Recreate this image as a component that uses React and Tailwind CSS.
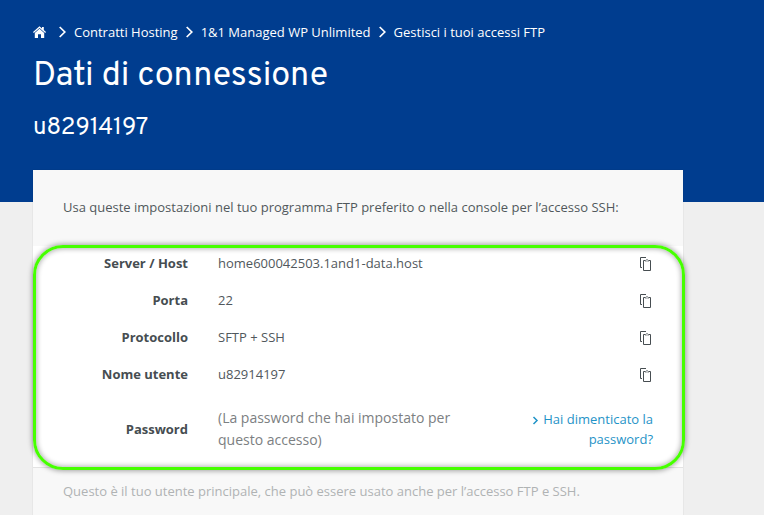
import React from "react";

const breadcrumbs = ["Contratti Hosting", "1&1 Managed WP Unlimited", "Gestisci i tuoi accessi FTP"];

const connectionData = [
    { label: "Server / Host", value: "home600042503.1and1-data.host" },
    { label: "Porta", value: "22" },
    { label: "Protocollo", value: "SFTP + SSH" },
    { label: "Nome utente", value: "u82914197" },
];

const HomeIcon = () => (
    <svg width="14" height="12" viewBox="0 0 14 12" fill="currentColor" aria-hidden="true">
        <path d="M6.500 0.300 9 2.500V1h1.800v3.100L13 6.100l-.8 1L6.500 2 .8 7.100 0 6.100Z" />
        <path d="M6.500 2.700 11.200 6.900V12H8V8.300H5V12H1.800V6.900Z" />
    </svg>
);

const ChevronIcon = () => (
    <svg width="7" height="12" viewBox="0 0 7 12" fill="none" stroke="currentColor" strokeWidth="1.700" aria-hidden="true">
        <path d="M.7 1 5.800 6 .7 11" />
    </svg>
);

const CopyIcon = () => (
    <svg width="11" height="15" viewBox="0 0 11 15" fill="none" stroke="currentColor" aria-hidden="true">
        <path d="M6 .5H.5V10.500H2" />
        <path d="M5 3.500H3.500V13.500H10.500V3.500H9" />
        <path d="M5 4 7 2.500 9 4" strokeOpacity=".8" />
        <path d="M5 4.500H9" strokeOpacity=".3" />
    </svg>
);

const Header = () => (
    <header className="h-[202px] bg-[#003d8f] px-[33px] pt-[22px] text-white">
        <nav aria-label="Breadcrumb">
            <ol className="flex h-5 items-center gap-2 text-[13px] leading-5 whitespace-nowrap">
                <li className="mr-1">
                    <a href="#home" aria-label="Home" className="block">
                        <HomeIcon />
                    </a>
                </li>
                {breadcrumbs.map((crumb) => (
                    <li key={crumb} className="flex items-center gap-2">
                        <ChevronIcon />
                        <a href="#crumb">{crumb}</a>
                    </li>
                ))}
            </ol>
        </nav>
        <h1 className="mt-[15px] font-[Overpass,Roboto,sans-serif] text-[34px] leading-10">Dati di connessione</h1>
        <h2 className="mt-[15px] font-[Overpass,Roboto,sans-serif] text-2xl leading-8">u82914197</h2>
    </header>
);

const ConnectionDetails = () => (
    <section className="relative border-b border-[#e3e3e3] bg-white text-[13px] leading-5">
        <dl>
            {connectionData.map((row) => (
                <div key={row.label} className="flex h-[37px] items-center pr-8">
                    <dt className="w-[155px] pb-1 text-right font-bold text-[#464d51]">{row.label}</dt>
                    <dd className="ml-[30px] flex flex-1 items-center justify-between text-[#51585c]">
                        <span className="pb-1">{row.value}</span>
                        <button type="button" aria-label={`Copia ${row.label}`} className="text-[#464d51]">
                            <CopyIcon />
                        </button>
                    </dd>
                </div>
            ))}
            <div className="flex h-[73px] items-center pr-[30px] pb-[3px]">
                <dt className="w-[155px] text-right font-bold text-[#464d51]">Password</dt>
                <dd className="ml-[30px] flex flex-1 items-center justify-between">
                    <span className="w-[260px] text-sm leading-[22px] text-[#7c8082]">(La password che hai impostato per questo accesso)</span>
                    <a href="#password" className="w-[130px] text-right text-[#1f93c7]">
                        <svg className="mr-1 inline-block" width="7" height="9" viewBox="0 0 7 9" fill="none" stroke="currentColor" strokeWidth="1.500" aria-hidden="true">
                            <path d="M1.500 1 5 4.500 1.500 8" />
                        </svg>
                        Hai dimenticato la password?
                    </a>
                </dd>
            </div>
        </dl>
        {/* Highlight around the connection data */}
        <div className="pointer-events-none absolute -top-px -right-0.5 -bottom-[3px] left-0 rounded-[30px] border-3 border-[#46ff00] shadow-[0_0_5px_1px_rgba(0,0,0,0.35),inset_0_0_5px_1px_rgba(0,0,0,0.3)]" />
    </section>
);

export default function App() {
    return (
        <div className="min-h-screen overflow-hidden bg-[#efefef] font-['Open_Sans',sans-serif]">
            <Header />
            <main className="relative -mt-8 px-[33px]">
                <div className="max-w-[650px] bg-[#f8f8f8] text-[13px] leading-5 shadow-[0_0_1px_rgba(0,0,0,0.2)]">
                    <p className="px-[30px] pt-[27px] pb-[29px] text-[#51585c]">
                        Usa queste impostazioni nel tuo programma FTP preferito o nella console per l’accesso SSH:
                    </p>
                    <ConnectionDetails />
                    <p className="px-[30px] pt-[13px] pb-[29px] text-[#b0b3b4]">
                        Questo è il tuo utente principale, che può essere usato anche per l’accesso FTP e SSH.
                    </p>
                </div>
            </main>
        </div>
    );
}
